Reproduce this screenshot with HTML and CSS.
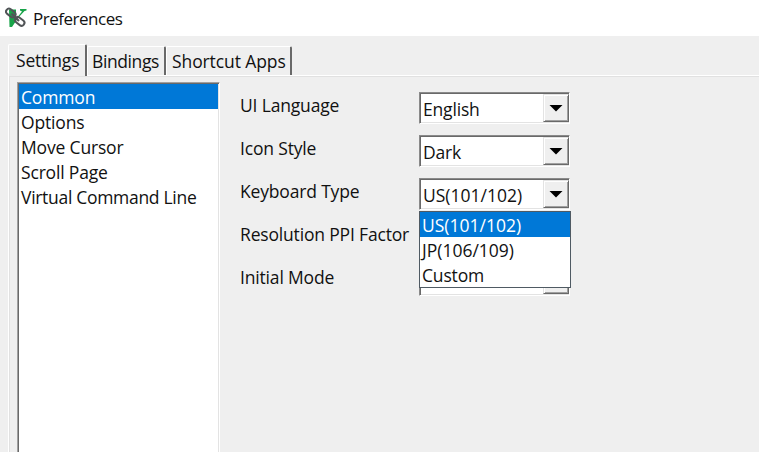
FILE: index.html
```
<!DOCTYPE html>
<html lang="en">
<head>
<meta charset="utf-8">
<title>Preferences</title>
<link rel="stylesheet" href="styles.css">
</head>
<body>
<header class="titlebar">
  <svg class="logo" width="22" height="22" viewBox="0 0 22 22">
    <path fill="#18a349" d="M4 2.500h7V12l6-7.500-2-1V2h6.500v1.500l-2 .5-6.500 7-6 9H4.500z"/>
    <g fill="none" stroke="#515457" stroke-width="2">
      <rect x="-5.200" y="-2.900" width="10.400" height="5.800" rx="2.900" transform="translate(5.800 6) rotate(38)"/>
      <rect x="-5.200" y="-2.900" width="10.400" height="5.800" rx="2.900" transform="translate(14.700 14.400) rotate(38)"/>
      <path stroke-width="2.200" d="M6.500 6.500l7.500 7.500"/>
    </g>
  </svg>
  <span class="title">Preferences</span>
</header>
<nav class="tabs">
  <div class="tab active"><span>Settings</span></div>
  <div class="tab bindings"><span>Bindings</span></div>
  <div class="tab apps"><span>Shortcut Apps</span></div>
</nav>
<main class="panel">
  <ul class="list">
    <li class="selected">Common</li>
    <li>Options</li>
    <li>Move Cursor</li>
    <li>Scroll Page</li>
    <li class="snug">Virtual Command Line</li>
  </ul>
  <form class="fields">
    <div class="row"><label>UI Language</label><div class="combo"><span>English</span><i class="arrow"></i></div></div>
    <div class="row"><label>Icon Style</label><div class="combo"><span>Dark</span><i class="arrow"></i></div></div>
    <div class="row"><label>Keyboard Type</label><div class="combo"><span class="code">US(101/102)</span><i class="arrow"></i>
      <ul class="menu"><li class="selected code">US(101/102)</li><li class="code">JP(106/109)</li><li>Custom</li></ul></div></div>
    <div class="row"><label>Resolution PPI Factor</label><div class="combo"><span></span><i class="arrow"></i></div></div>
    <div class="row"><label>Initial Mode</label><div class="combo"><span></span><i class="arrow"></i></div></div>
  </form>
</main>
</body>
</html>
```
FILE: styles.css
```
* { box-sizing: border-box; }
body { margin: 0; height: 452px; overflow: hidden; background: #efefef; color: #111; font: 17.5px/25px "Open Sans", "Noto Sans", sans-serif; letter-spacing: -.17px; display: flex; flex-direction: column; }
ul { list-style: none; margin: 0; padding: 0; }
.snug { letter-spacing: -.3px; }
.code { letter-spacing: 0; }
.titlebar { height: 36px; flex: none; background: #fff; display: flex; padding: 7px 0 0 5px; }
.logo { flex: none; }
.title { margin: -1px 0 0 6px; font-size: 17px; letter-spacing: -.48px; }
.tabs { display: flex; align-items: flex-end; height: 39px; flex: none; padding-left: 8px; }
.tab { height: 29px; border: solid; border-width: 1px 2px 0 1px; border-color: #fff #696969 #fff #fff; border-top-right-radius: 2px; border-top-left-radius: 2px; padding-top: 2px; white-space: nowrap; }
.tab.active { width: 79px; height: 32px; margin-bottom: -1px; padding: 3px 0 0 7px; background: #efefef; z-index: 1; letter-spacing: -.2px; }
.bindings { width: 79px; padding-left: 4px; letter-spacing: -.4px; }
.apps { width: 126px; padding-left: 5px; letter-spacing: -.1px; }
.panel { flex: 1; display: flex; margin-left: 8px; border: solid #fff; border-width: 1px 0 0 1px; box-shadow: inset 1px 1px #e1e1e1; padding: 6px 0 0 8px; }
.list { width: 203px; height: 380px; background: #fff; border: solid; border-width: 1px 1px 0; border-color: #a0a0a0 #fff #fff #a0a0a0; box-shadow: inset 1px 1px #696969, inset -1px 0 #e3e3e3; padding: 1px 1px 0; }
.list li { height: 25px; padding: 1px 0 0 2px; }
.selected { background: #0078d7; color: #fff; }
.fields { margin: 10px 0 0 20px; width: 331px; }
.row { display: flex; height: 43px; }
.row label { width: 179px; flex: none; padding-top: 1px; white-space: nowrap; }
.combo { position: relative; width: 151px; height: 32px; background: #fff; border: 1px solid; border-color: #8a8a8a #fff #fff #8a8a8a; box-shadow: inset 1px 1px #696969, inset -1px -1px #e3e3e3; padding: 1px; display: flex; justify-content: space-between; }
.combo span { padding: 3px 0 0 2px; }
.arrow { width: 26px; height: 28px; margin-right: -1px; background: #efefef; border: 1px solid; border-color: #e3e3e3 #696969 #696969 #e3e3e3; box-shadow: inset 1px 1px #fff, inset -1px -1px #a0a0a0; display: grid; place-items: center; }
.arrow::after { content: ""; width: 14px; height: 7px; background: #000; clip-path: polygon(0 0, 100% 0, 50% 100%); }
.menu { position: absolute; z-index: 5; top: 32px; left: -1px; width: 152px; height: 77px; background: #fff; border: 1px solid #4f5a63; }
.menu li { height: 25px; padding: 1px 0 0 2px; }
```
